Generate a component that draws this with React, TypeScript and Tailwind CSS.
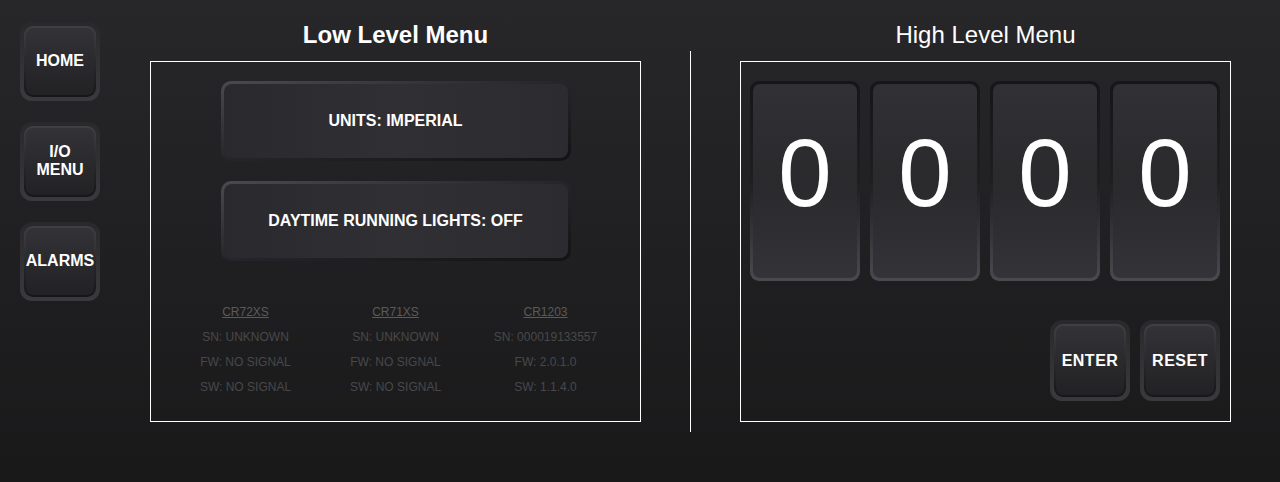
import React from "react";

const font = { fontFamily: '"Liberation Sans", Arial, sans-serif' };

function NavButton({ children }: { children: React.ReactNode }) {
  return (
    <div className="w-[80px] h-[79px] rounded-[12px] p-[4px] bg-gradient-to-b from-[#29292b] to-[#3a3a3e]">
      <div className="w-full h-full rounded-[9px] p-[2px] bg-gradient-to-b from-[#404044] to-[#161618]">
        <div className="w-full h-full rounded-[7px] bg-gradient-to-b from-[#333337] to-[#222225] flex items-center justify-center text-center text-white font-bold text-[16px] leading-[18px] pb-[2px]">
          {children}
        </div>
      </div>
    </div>
  );
}

function WideButton({ children }: { children: React.ReactNode }) {
  return (
    <div className="w-[350px] h-[80px] rounded-[10px] p-[3px] bg-gradient-to-br from-[#4a4a50] via-[#26262a] to-[#131315]">
      <div className="w-full h-full rounded-[8px] bg-gradient-to-r from-[#2a2a2e] via-[#303034] to-[#2c2c30] flex items-center justify-center text-white font-bold text-[16px]">
        {children}
      </div>
    </div>
  );
}

function Tile() {
  return (
    <div className="w-[110px] h-[200px] rounded-[9px] p-[3px] bg-gradient-to-b from-[#161618] via-[#1f1f22] to-[#4a4a50]">
      <div className="w-full h-full rounded-[7px] bg-gradient-to-b from-[#313135] via-[#2a2a2d] to-[#333338] flex items-center justify-center">
        <span className="text-white text-[96px] leading-none -mt-[16px]">0</span>
      </div>
    </div>
  );
}

function SquareButton({ children }: { children: React.ReactNode }) {
  return (
    <div className="w-[80px] h-[81px] rounded-[12px] p-[4px] bg-gradient-to-b from-[#29292b] to-[#3a3a3e]">
      <div className="w-full h-full rounded-[9px] p-[2px] bg-gradient-to-b from-[#404044] to-[#161618]">
        <div className="w-full h-full rounded-[7px] bg-gradient-to-b from-[#333337] to-[#222225] flex items-center justify-center text-white font-bold text-[16px] tracking-[0.5px]">
          {children}
        </div>
      </div>
    </div>
  );
}

function InfoCol({ title, rows }: { title: string; rows: string[] }) {
  return (
    <div className="flex flex-col items-center text-[12px] leading-[25px]">
      <div className="text-[#5a5a5c] underline">{title}</div>
      {rows.map((r) => (
        <div key={r} className="text-[#48484a]">
          {r}
        </div>
      ))}
    </div>
  );
}

export default function App() {
  return (
    <div
      style={font}
      className="w-[1280px] h-[482px] overflow-hidden bg-gradient-to-b from-[#27272a] to-[#19191a] flex"
    >
      <div className="w-[150px] pl-[20px] pt-[22px] flex flex-col gap-[21px]">
        <NavButton>HOME</NavButton>
        <NavButton>
          I/O
          <br />
          MENU
        </NavButton>
        <NavButton>ALARMS</NavButton>
      </div>

      <div className="w-[491px] pt-[15px] flex flex-col">
        <div className="h-[40px] leading-[40px] text-center text-white font-bold text-[24px]">
          Low Level Menu
        </div>
        <div className="mt-[6px] h-[361px] border border-white flex flex-col items-center pt-[19px]">
          <WideButton>UNITS: IMPERIAL</WideButton>
          <div className="h-[20px]" />
          <WideButton>DAYTIME RUNNING LIGHTS: OFF</WideButton>
          <div className="mt-[39px] w-[450px] grid grid-cols-3">
            <InfoCol title="CR72XS" rows={["SN: UNKNOWN", "FW: NO SIGNAL", "SW: NO SIGNAL"]} />
            <InfoCol title="CR71XS" rows={["SN: UNKNOWN", "FW: NO SIGNAL", "SW: NO SIGNAL"]} />
            <InfoCol title="CR1203" rows={["SN: 000019133557", "FW: 2.0.1.0", "SW: 1.1.4.0"]} />
          </div>
        </div>
      </div>

      <div className="ml-[49px] mt-[51px] w-px h-[381px] bg-white" />

      <div className="ml-[49px] w-[491px] pt-[15px] flex flex-col">
        <div className="h-[40px] leading-[40px] text-center text-white text-[24px]">
          High Level Menu
        </div>
        <div className="mt-[6px] h-[361px] border border-white flex flex-col pt-[19px] pl-[9px] pr-[10px]">
          <div className="flex gap-[10px]">
            <Tile />
            <Tile />
            <Tile />
            <Tile />
          </div>
          <div className="mt-[39px] flex justify-end gap-[10px]">
            <SquareButton>ENTER</SquareButton>
            <SquareButton>RESET</SquareButton>
          </div>
        </div>
      </div>
    </div>
  );
}
